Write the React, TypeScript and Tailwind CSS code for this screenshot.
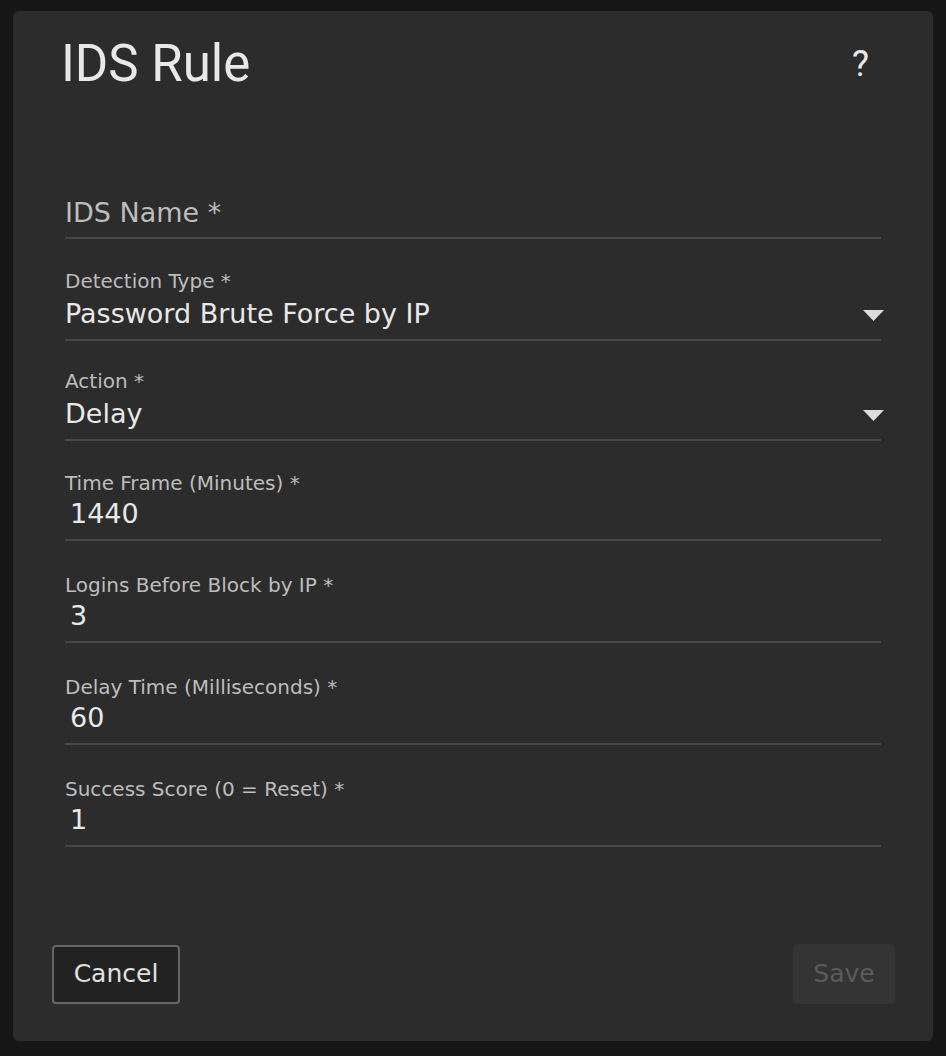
import React from "react";

const Caret = () => (
  <svg width="21" height="11" viewBox="0 0 21 11" className="shrink-0">
    <polygon points="0,0 21,0 10.5,11" fill="#dcdcdc" />
  </svg>
);

function SelectField({ label, value, h = 101 }: { label: string; value: string; h?: number }) {
  return (
    <div className="flex flex-col justify-end" style={{ height: h }}>
      <div className="text-[20px] leading-[24px] text-[#bdbdbd]">{label}</div>
      <div className="mt-[5px] flex items-center justify-between pb-[9px]">
        <span className="text-[27px] leading-[32px] text-[#e8e8e8]">{value}</span>
        <span className="mr-[-3px] mt-[2px]"><Caret /></span>
      </div>
      <div className="h-[2px] bg-[#474747]" />
    </div>
  );
}

function InputField({ label, value, h = 101 }: { label: string; value: string; h?: number }) {
  return (
    <div className="flex flex-col justify-end" style={{ height: h }}>
      <div className="text-[20px] leading-[24px] text-[#bdbdbd]">{label}</div>
      <div className="mt-[3px] pb-[9px] pl-[5px] text-[27px] leading-[32px] text-[#e8e8e8]">{value}</div>
      <div className="h-[2px] bg-[#474747]" />
    </div>
  );
}

export default function App() {
  return (
    <div
      className="min-h-[1056px] w-[946px] bg-[#171717] pl-[13px] pr-[13px] pt-[11px]"
      style={{ fontFamily: '"Lucida Grande", "DejaVu Sans", "Open Sans", sans-serif' }}
    >
      <div className="flex h-[1030px] w-[920px] flex-col rounded-[6px] bg-[#2c2c2c]">
        <div className="flex items-start justify-between pl-[48px] pr-[64px] pt-[23px]">
          <h1
            className="text-[51px] font-normal leading-[60px] text-[#e8e8e8]"
            style={{ fontFamily: 'Roboto, "Liberation Sans", sans-serif' }}
          >
            IDS Rule
          </h1>
          <span
            className="mt-[10px] text-[36px] font-normal leading-[40px] text-[#e8e8e8]"
            style={{ fontFamily: 'Roboto, "Liberation Sans", sans-serif' }}
          >
            ?
          </span>
        </div>

        <div className="mx-[52px] mt-[99px] flex flex-col">
          <div className="flex h-[46px] flex-col justify-end">
            <div className="pb-[8px] text-[27px] leading-[32px] text-[#bdbdbd]">IDS Name *</div>
            <div className="h-[2px] bg-[#474747]" />
          </div>
          <SelectField label="Detection Type *" value="Password Brute Force by IP" h={102} />
          <SelectField label="Action *" value="Delay" h={100} />
          <InputField label="Time Frame (Minutes) *" value="1440" h={100} />
          <InputField label="Logins Before Block by IP *" value="3" h={102} />
          <InputField label="Delay Time (Milliseconds) *" value="60" h={102} />
          <InputField label="Success Score (0 = Reset) *" value="1" h={102} />
        </div>

        <div className="mt-auto flex items-center justify-between pb-[37px] pl-[39px] pr-[38px]">
          <button className="h-[59px] w-[128px] rounded-[4px] border-2 border-[#666666] bg-[#222222] text-[25px] text-[#e0e0e0]">
            Cancel
          </button>
          <button className="h-[60px] w-[102px] rounded-[4px] bg-[#343434] text-[25px] text-[#5a5a5a]">
            Save
          </button>
        </div>
      </div>
    </div>
  );
}
